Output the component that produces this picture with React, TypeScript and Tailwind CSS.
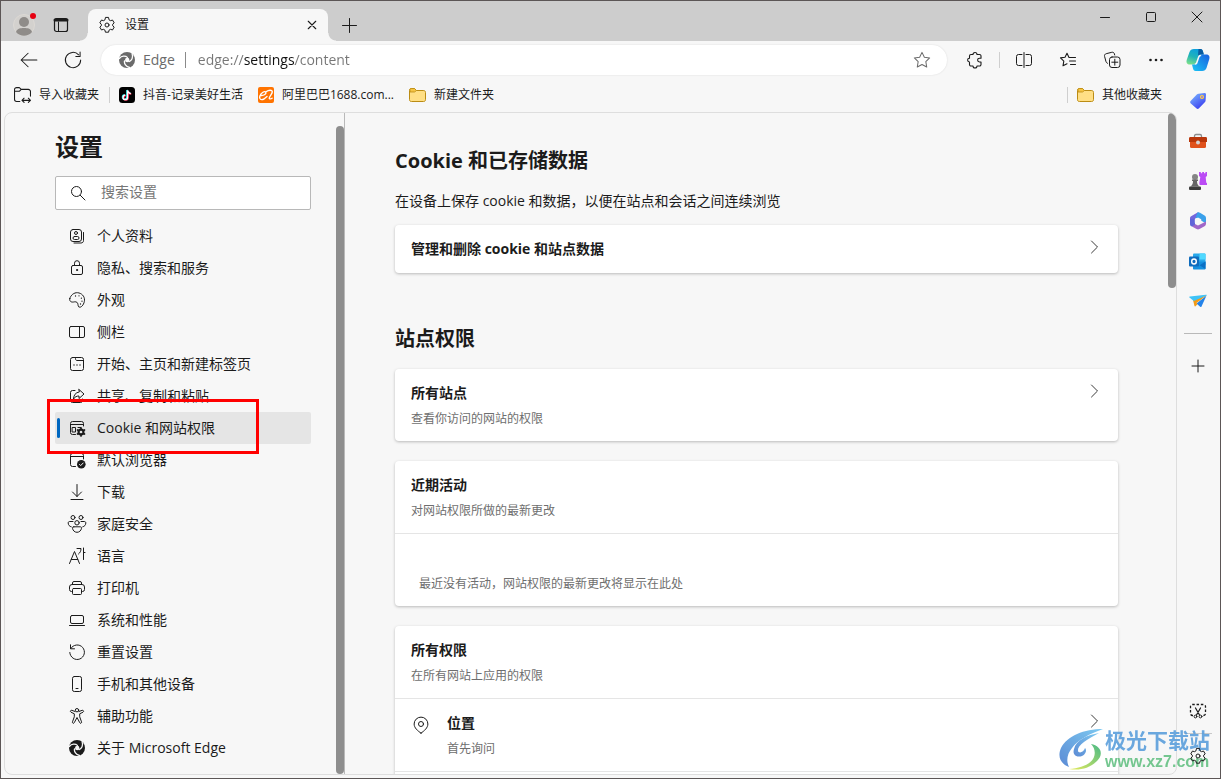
import { useState } from 'react';
import type { ReactNode } from 'react';

type IconProps = { children: ReactNode; className?: string };

function Icon({ children, className = 'size-4' }: IconProps) {
  return (
    <svg
      className={`shrink-0 overflow-visible ${className}`}
      viewBox="0 0 16 16"
      fill="none"
      stroke="currentColor"
      strokeLinecap="round"
      strokeLinejoin="round"
      aria-hidden="true"
    >
      {children}
    </svg>
  );
}

function GearIcon({ className }: { className?: string }) {
  return (
    <Icon className={className}>
      <path d="M6.4.8 6 2.800 4.400 3.700 2.500 3 .8 5.900 2.300 7.200v1.600L.8 10.100 2.500 13l1.900-.7 1.600.9.400 2h3.200l.4-2 1.600-.9 1.900.7 1.700-2.900-1.500-1.300V7.200l1.500-1.300L13.500 3l-1.900.7L10 2.800 9.600.8z" />
      <circle cx="8" cy="8" r="2" />
    </Icon>
  );
}

function EdgeIcon({ gap }: { gap: string }) {
  return (
    <svg className="size-4 shrink-0" viewBox="0 0 16 16" aria-hidden="true">
      <circle cx="8" cy="8" r="8" fill="currentColor" />
      <g fill="none" stroke={gap} strokeWidth="1.3" strokeLinecap="round">
        <path d="M.3 6.5C2.5 3.6 6.5 3.6 8.4 5.4" />
        <path d="M.3 6.5C2.5 3.6 6.5 3.6 8.4 5.4" transform="rotate(120 8 8)" />
        <path d="M.3 6.5C2.5 3.6 6.5 3.6 8.4 5.4" transform="rotate(240 8 8)" />
      </g>
      <circle cx="8.2" cy="8" r="2.2" fill={gap} />
    </svg>
  );
}

function FolderIcon() {
  return (
    <svg className="h-4 w-[17px] shrink-0" viewBox="0 0 17 16" aria-hidden="true">
      <path d="M.5 3.500C.5 2.200 1 1.500 2.200 1.500h3.300L7.500 3.500H14.200c1.600 0 2.300.7 2.300 2V12.700c0 1.200-.7 1.800-2 1.800H2.500c-1.300 0-2-.6-2-1.800z" fill="#ffdf85" stroke="#bb8c14" />
      <path d="M1 5h4.500L7.500 3.500 5.500 1.500H2.200C1.200 1.500 1 2 1 3z" fill="#f5c443" stroke="#bb8c14" strokeWidth=".8" />
    </svg>
  );
}

const navItems = [
  {
    label: '个人资料',
    icon: (
      <>
        <rect x="1.500" y="1.500" width="11" height="12" rx="2.500" />
        <circle cx="7" cy="5" r="1.500" />
        <rect x="4" y="8.500" width="6" height="3" rx="1.500" />
        <path d="M14.500 4.500v8c0 1.600-1 2.500-2.600 2.500H5" />
      </>
    ),
  },
  {
    label: '隐私、搜索和服务',
    icon: (
      <>
        <rect x="2.500" y="5.500" width="11" height="9" rx="1.500" />
        <path d="M5.500 5.500V3.200a2.500 2.500 0 0 1 5 0v2.300" />
        <circle cx="8" cy="10" r=".6" fill="currentColor" />
      </>
    ),
  },
  {
    label: '外观',
    icon: (
      <>
        <path d="M.8 6.500C1.800 3 5 .5 8.500.7c4 .3 7.200 3.500 7 7.500-.2 3.800-2.800 7-4.600 7-2.300 0-1.500-2.300-2.300-4C7.800 9.500 6 9.700 4.500 10 2.500 10.400 0 9.500.8 6.500z" />
        <path d="M6.500 4h.01M10 3.800h.01M12.400 6.200h.01M13 9.200h.01M11.500 12h.01" strokeWidth="1.300" />
      </>
    ),
  },
  {
    label: '侧栏',
    icon: (
      <>
        <rect x=".5" y="2.500" width="15" height="11" rx="1.500" />
        <path d="M10.500 2.500v11" />
      </>
    ),
  },
  {
    label: '开始、主页和新建标签页',
    icon: (
      <>
        <rect x="1.500" y="1.500" width="13" height="13" rx="2" />
        <path d="M6.500 1.500v1c0 1 .4 2 1.300 2h6.700" />
        <path d="M4.500 9h1M7.500 9h1M10.500 9h1" strokeWidth="1.600" strokeLinecap="butt" />
      </>
    ),
  },
  {
    label: '共享、复制和粘贴',
    icon: (
      <>
        <path d="M6 2.500H3.500a2 2 0 0 0-2 2v8a2 2 0 0 0 2 2h8a2 2 0 0 0 2-2V11" />
        <path d="M10 1.500 15 6l-5 4.500V8C7.500 8 6 8.800 4.500 11c.2-3.800 2-6.500 5.500-7z" />
      </>
    ),
  },
  {
    label: 'Cookie 和网站权限',
    icon: (
      <>
        <path d="M6.500 14.500h-3a2 2 0 0 1-2-2v-9a2 2 0 0 1 2-2h9a2 2 0 0 1 2 2V6M1.500 4.500h13" />
        <rect x="3.500" y="7.500" width="3" height="4.500" />
        <path d="M9 7.500h3" />
        <circle cx="12" cy="12" r="2.400" strokeWidth="2.200" />
        <path d="M12 8v8M8.500 10l7 4M15.500 10l-7 4" strokeWidth="1.700" />
        <circle cx="12" cy="12" r="1.300" fill="#e5e5e5" stroke="none" />
      </>
    ),
  },
  {
    label: '默认浏览器',
    icon: (
      <>
        <path d="M6.500 14.500h-3a2 2 0 0 1-2-2v-9a2 2 0 0 1 2-2h9a2 2 0 0 1 2 2V7M1.500 4.500h13" />
        <circle cx="12.300" cy="12.200" r="4.300" fill="currentColor" stroke="none" />
        <path d="m10.500 12.400 1.200 1.200 2.500-2.600" stroke="#f7f7f7" />
      </>
    ),
  },
  {
    label: '下载',
    icon: <path d="M8 .5v12M3.500 8 8 12.500 12.500 8M2 15.500h12" />,
  },
  {
    label: '家庭安全',
    icon: (
      <>
        <circle cx="4" cy="1.500" r="2" />
        <circle cx="12" cy="1.500" r="2" />
        <circle cx="8" cy="6.800" r="2.200" />
        <path d="M4 5.500H.8C-.3 5.500-.8 6-.8 7c0 2 1.300 3.500 3 3.800M12 5.500h3.200c1.100 0 1.600.5 1.600 1.500 0 2-1.300 3.500-3 3.800M4.800 10.800h6.400c1 0 1.500.5 1.300 1.500-.4 2.300-2.200 4-4.500 4s-4.100-1.700-4.500-4c-.2-1 .3-1.500 1.300-1.500z" />
      </>
    ),
  },
  {
    label: '语言',
    icon: (
      <path d="M.5 15.500 5.500 3.500l5 12M2.300 11.500h6.500M8 .5h4c0 2.500-.8 4.200-2.500 5.500M14.500 0v11.500M14.500 4.500H16" />
    ),
  },
  {
    label: '打印机',
    icon: (
      <>
        <path d="M3.500 11.500h-1a2 2 0 0 1-2-2V7a2.500 2.500 0 0 1 2.500-2.500h10A2.500 2.500 0 0 1 15.500 7v2.500a2 2 0 0 1-2 2h-1" />
        <path d="M3.500 4.500V3a1.500 1.500 0 0 1 1.500-1.500h6A1.500 1.500 0 0 1 12.500 3v1.500" />
        <rect x="3.500" y="8.500" width="9" height="6" rx="1" />
      </>
    ),
  },
  {
    label: '系统和性能',
    icon: (
      <>
        <rect x="1.500" y="3.500" width="13" height="8" rx="1.500" />
        <path d="M.5 13.500h15" />
      </>
    ),
  },
  {
    label: '重置设置',
    icon: <path d="M1.500.8v4h4M1.800 4.500A7.300 7.300 0 1 1 .8 8.500" />,
  },
  {
    label: '手机和其他设备',
    icon: (
      <>
        <rect x="3.500" y=".5" width="9" height="15" rx="1.800" />
        <path d="M7 12.500h2" />
      </>
    ),
  },
  {
    label: '辅助功能',
    icon: (
      <>
        <circle cx="8" cy="2.200" r="1.700" />
        <path d="M6 3.500 2.800 2.300c-1.300-.4-2 1.300-.8 1.900l3.300 1.600v3L3.500 13.800c-.5 1.500 1.200 2.100 1.800.8L8 9.500l2.700 5.100c.6 1.300 2.300.7 1.800-.8l-1.800-5v-3L14 4.200c1.200-.6.500-2.300-.8-1.900L10 3.500" />
      </>
    ),
  },
  { label: '关于 Microsoft Edge', icon: null },
];

function Watermark() {
  return (
    <div className="pointer-events-none absolute right-2.5 bottom-1.5 z-20 flex items-center font-bold opacity-90">
      <svg className="h-11 w-[46px]" viewBox="0 0 46 44" aria-hidden="true">
        <defs>
          <linearGradient id="swirlBlue" x1="0" y1="1" x2="1" y2="0">
            <stop offset="0" stopColor="#4b7fd0" />
            <stop offset="1" stopColor="#6fc4f0" />
          </linearGradient>
          <linearGradient id="swirlGreen" x1="0" y1="1" x2="1" y2="0">
            <stop offset="0" stopColor="#e6ea4a" />
            <stop offset="1" stopColor="#35b27a" />
          </linearGradient>
        </defs>
        <path d="M44 1C25 1 8 8 2 20c-4 9 0 16 8 19-3-6-2-13 3-19C19 12 30 6 44 1z" fill="url(#swirlBlue)" />
        <path d="M40 5c-12 2-23 7-25 16-2 6 3 9 8 7 4-2 5-6 3-8-1 4-6 6-7 3-1-6 10-12 21-18z" fill="url(#swirlBlue)" />
        <path d="M32 16c10 2 13 10 6 17-7 7-17 10-28 8 11-1 20-4 24-10 3-5 2-11-2-15z" fill="url(#swirlGreen)" />
      </svg>
      <div>
        <div className="text-[21px] leading-6 text-[#5b9fdc]">极光下载站</div>
        <div className="font-['Liberation_Sans'] text-[16px] leading-5 text-[#66c184]">www.xz7.com</div>
      </div>
    </div>
  );
}

function TitleBar() {
  return (
    <header className="flex h-10 shrink-0 items-stretch bg-[#cdcdcd]">
      <div className="flex w-[87px] items-center gap-[18px] pt-2 pl-3">
        <button aria-label="个人资料" className="relative">
          <svg className="size-[22px]" viewBox="0 0 22 22" aria-hidden="true">
            <circle cx="11" cy="11" r="10.500" fill="#d3d1ce" stroke="#dcd9d4" />
            <circle cx="11" cy="8" r="5" fill="#8f8c89" />
            <path d="M3 18c1-3.500 4-4 8-4s7 .5 8 4c-2 2.500-5 3.700-8 3.700S5 20.500 3 18z" fill="#8f8c89" />
          </svg>
          <span className="absolute -top-px -right-px size-1.5 rounded-full bg-[#e60012]" />
        </button>
        <button aria-label="标签页操作菜单">
          <Icon>
            <rect x="1.500" y="1.500" width="13" height="13" rx="2" strokeWidth="1.200" />
            <path d="M2 3h12" strokeWidth="3" />
            <path d="M5.500 5v9" />
          </Icon>
        </button>
      </div>
      <div className="relative mt-2 flex w-60 items-center rounded-t-lg bg-[#f7f7f7] px-[11px]">
        <span className="absolute bottom-0 -left-2 size-2 bg-[radial-gradient(circle_at_0_0,#cdcdcd_7px,#f7f7f7_8px)]" />
        <span className="absolute -right-2 bottom-0 size-2 bg-[radial-gradient(circle_at_100%_0,#cdcdcd_7px,#f7f7f7_8px)]" />
        <GearIcon className="size-4" />
        <span className="ml-2.5 flex-1 text-xs leading-4">设置</span>
        <button aria-label="关闭标签页">
          <Icon className="size-2.5">
            <path d="m2 2 12 12M14 2 2 14" strokeWidth="1.800" />
          </Icon>
        </button>
      </div>
      <button aria-label="新建标签页" className="mt-2 ml-[13px]">
        <Icon>
          <path d="M8.500 1.500v14M1.500 8.500h14" />
        </Icon>
      </button>
      <div className="ml-auto flex h-8">
        <button aria-label="最小化" className="flex w-[46px] items-center justify-center">
          <Icon className="size-4">
            <path d="M3.500 8.500h9" />
          </Icon>
        </button>
        <button aria-label="最大化" className="flex w-[46px] items-center justify-center">
          <Icon className="size-4">
            <rect x="3.500" y="3.500" width="9" height="9" rx="1" />
          </Icon>
        </button>
        <button aria-label="关闭" className="flex w-[46px] items-center justify-center">
          <Icon className="size-4">
            <path d="m3 3 10 10M13 3 3 13" />
          </Icon>
        </button>
      </div>
    </header>
  );
}

function ToolButton({ label, children }: { label: string; children: ReactNode }) {
  return (
    <button aria-label={label} className="flex h-8 w-10 shrink-0 items-center justify-center">
      {children}
    </button>
  );
}

function Toolbar() {
  const [url, setUrl] = useState('edge://settings/content');

  return (
    <div className="flex h-[38px] shrink-0 items-center gap-1 pr-px pl-2">
      <ToolButton label="返回">
        <Icon className="size-[18px]">
          <path d="M15 8H1M7.200 2 1 8l6.200 6" strokeWidth=".9" />
        </Icon>
      </ToolButton>
      <ToolButton label="刷新">
        <Icon className="size-[18px]">
          <path d="M14.800 8A6.800 6.800 0 1 1 13 3.400M14.300 1v3.800h-3.800" strokeWidth=".9" />
        </Icon>
      </ToolButton>
      <div className="mr-1 ml-1 flex h-[30px] flex-1 items-center rounded-full bg-white pr-4 pl-[18px] text-sm text-[#6b6b6b] shadow-[0_0_2px_rgba(0,0,0,0.12)]">
        <EdgeIcon gap="#ffffff" />
        <span className="ml-2 leading-5">Edge</span>
        <span className="mr-3 ml-2.5 h-4 w-px bg-[#8a8a8a]" />
        <input
          aria-label="地址栏"
          value={url}
          onChange={(e) => setUrl(e.target.value)}
          className="min-w-0 flex-1 bg-[linear-gradient(90deg,#767676_46px,#111_46px,#111_97px,#767676_97px)] bg-clip-text leading-5 text-transparent caret-black outline-none"
        />
        <button aria-label="收藏此页">
          <Icon className="size-[18px]">
            <path d="m8 1.200 2.100 4.300 4.700.7-3.400 3.300.8 4.700L8 12l-4.200 2.200.8-4.700L1.200 6.200l4.700-.7z" strokeWidth=".9" />
          </Icon>
        </button>
      </div>
      <ToolButton label="扩展">
        <Icon>
          <path d="M4 2.500h2a2 2 0 0 1 4 0h2.500a1.500 1.500 0 0 1 1.500 1.500v2.200h-1.500a1.900 1.900 0 0 0 0 3.800H14v2.500a1.500 1.500 0 0 1-1.500 1.500H10a2 2 0 0 1-4 0H4a1.500 1.500 0 0 1-1.500-1.500V10a1.900 1.900 0 0 1 0-3.800V4A1.500 1.500 0 0 1 4 2.500z" strokeWidth="1.100" />
        </Icon>
      </ToolButton>
      <span className="h-4 w-px bg-[#cfcfcf]" />
      <ToolButton label="拆分屏幕">
        <Icon>
          <path d="M6 2.500H2.500a2 2 0 0 0-2 2v7a2 2 0 0 0 2 2H6M10 2.500h3.500a2 2 0 0 1 2 2v7a2 2 0 0 1-2 2H10M8 .5v15" />
        </Icon>
      </ToolButton>
      <ToolButton label="收藏夹">
        <Icon>
          <path d="M9 5.500 7 1.200 5 5.200l-4.500.7 3.300 3.200-.8 4.700 4-2.100M9.500 5.500h6M9.500 9h6M10.500 12.500h5" strokeWidth="1.100" />
        </Icon>
      </ToolButton>
      <ToolButton label="集锦">
        <Icon>
          <path d="M3.500 11.300C2.500 10.900 2.200 10.300 1.900 9.300L.6 4.500c-.4-1.500.3-2.400 1.600-2.800l5.600-1.400c1.300-.3 2.200.3 2.600 1.500l.3 1.200" />
          <rect x="5.500" y="5" width="10.500" height="10.500" rx="2.500" />
          <path d="M10.800 7.200v6M7.800 10.200h6" />
        </Icon>
      </ToolButton>
      <ToolButton label="设置及其他">
        <Icon>
          <g fill="currentColor" stroke="none">
            <circle cx="2.500" cy="8" r="1.300" />
            <circle cx="8" cy="8" r="1.300" />
            <circle cx="13.500" cy="8" r="1.300" />
          </g>
        </Icon>
      </ToolButton>
    </div>
  );
}

function Bookmark({ icon, label }: { icon: ReactNode; label: string }) {
  return (
    <a href="#" className="flex items-center gap-2 text-xs leading-4 whitespace-nowrap text-[#1b1b1b]">
      {icon}
      {label}
    </a>
  );
}

function BookmarksBar() {
  return (
    <div className="flex h-[33px] shrink-0 items-center pr-[15px] pb-0.5 pl-[13px]">
      <Bookmark
        label="导入收藏夹"
        icon={
          <Icon className="size-[17px]">
            <path d="M5.500 14.500H2.500a2 2 0 0 1-2-2v-9a2 2 0 0 1 2-2H5l1.800 1.700h6.700a2 2 0 0 1 2 2V9.500M.5 5H5l1.800-1.800" />
            <path d="M7.500 13.500h8M9.500 11.500l-2 2 2 2M13.500 11.500l2 2-2 2" />
          </Icon>
        }
      />
      <span className="mr-[9px] ml-2.5 h-4 w-px bg-[#cfcfcf]" />
      <div className="flex items-center gap-[15px]">
        <Bookmark
          label="抖音-记录美好生活"
          icon={
            <svg className="size-4 shrink-0" viewBox="0 0 16 16" aria-hidden="true">
              <rect width="16" height="16" rx="3.500" fill="#000" />
              <g fill="none" strokeWidth="1.700">
                <path d="M8 3v7a2.200 2.200 0 1 1-2.200-2.200M8 3c.3 2 1.500 3 3.300 3.200" stroke="#25f4ee" />
                <path d="M9 3.800v7a2.200 2.200 0 1 1-2.200-2.200M9 3.800c.3 2 1.500 3 3.300 3.200" stroke="#fe2c55" />
                <path d="M8.500 3.400v7a2.200 2.200 0 1 1-2.200-2.200M8.500 3.400c.3 2 1.500 3 3.300 3.200" stroke="#fff" strokeWidth="1.300" />
              </g>
            </svg>
          }
        />
        <Bookmark
          label="阿里巴巴1688.com..."
          icon={
            <svg className="size-4 shrink-0" viewBox="0 0 16 16" aria-hidden="true">
              <rect width="16" height="16" rx="2" fill="#ff7300" />
              <path d="M3 8.500c3 .2 5.500-1.800 4.800-3.300C7 3.700 3 5.500 1.800 9.200c-.9 3 1.200 4.300 4.200 2.800l3-2.500M8.500 4.500c2-1.500 5.500-1.800 5.800 0 .3 2-2.800 4.500-3 6.500-.1 1.300 1.800 1 2.800.2" fill="none" stroke="#fff" strokeWidth="1.400" strokeLinecap="round" />
            </svg>
          }
        />
        <Bookmark label="新建文件夹" icon={<FolderIcon />} />
      </div>
      <span className="mr-[9px] ml-auto h-4 w-px bg-[#cfcfcf]" />
      <Bookmark label="其他收藏夹" icon={<FolderIcon />} />
    </div>
  );
}

function SettingsNav() {
  const [query, setQuery] = useState('');
  const [active, setActive] = useState('Cookie 和网站权限');

  return (
    <div className="flex w-[340px] shrink-0 border-r border-[#b9b9b9]">
      <div className="flex-1 pt-[18px] pr-[25px] pl-[50px]">
        <h1 className="text-2xl leading-8 font-bold">设置</h1>
        <label className="mt-[13px] flex h-[34px] items-center rounded-xs border border-[#b8b8b8] bg-white pl-3.5">
          <Icon className="size-4">
            <circle cx="6.500" cy="6.500" r="5" />
            <path d="m10.300 10.300 4.700 4.700" />
          </Icon>
          <input
            aria-label="搜索设置"
            placeholder="搜索设置"
            value={query}
            onChange={(e) => setQuery(e.target.value)}
            className="ml-[15px] w-40 pb-0.5 text-sm leading-5 outline-none placeholder:text-[#767676]"
          />
        </label>
        <nav className="mt-2.5">
          {navItems.map((item) => (
            <a
              key={item.label}
              href="#"
              onClick={() => setActive(item.label)}
              className={`relative flex h-8 items-center gap-3 rounded-xs pl-3.5 text-sm leading-5 whitespace-nowrap ${
                item.label === active ? 'z-10 bg-[#e5e5e5]' : ''
              }`}
            >
              {item.label === active && (
                <>
                  <span className="absolute top-1.5 left-0.5 h-5 w-[3px] rounded-xs bg-[#0067c0]" />
                  <span className="absolute -top-[13px] -left-2 h-[55px] w-[212px] border-3 border-[#ff0000]" />
                </>
              )}
              {item.icon ? <Icon>{item.icon}</Icon> : <EdgeIcon gap="#f7f7f7" />}
              {item.label}
            </a>
          ))}
        </nav>
      </div>
      <div className="mt-[13px] w-2 rounded-full bg-[#8e8e8e]" />
    </div>
  );
}

function Chevron() {
  return (
    <Icon className="ml-auto size-4 text-[#3a3a3a]">
      <path d="m5.500 2 6 6-6 6" />
    </Icon>
  );
}

type RowProps = { title: string; sub?: string; icon?: ReactNode; link?: boolean };

function Row({ title, sub, icon, link }: RowProps) {
  const body = (
    <>
      {icon}
      <div>
        <div className="text-sm leading-5 font-bold">{title}</div>
        {sub && <div className="mt-2 text-xs leading-4 text-[#6e6e6e]">{sub}</div>}
      </div>
      {link && <Chevron />}
    </>
  );
  return link ? (
    <a href="#" className="flex items-start px-4 py-3.5">
      {body}
    </a>
  ) : (
    <div className="flex items-start px-4 py-3.5">{body}</div>
  );
}

function Card({ children, className = '' }: { children: ReactNode; className?: string }) {
  return (
    <section className={`divide-y divide-[#e5e5e5] rounded bg-white shadow-[0_1px_3px_rgba(0,0,0,0.25)] ${className}`}>
      {children}
    </section>
  );
}

function SettingsContent() {
  return (
    <main className="flex min-w-0 flex-1">
      <div className="flex-1 px-[50px] pt-[34px]">
        <h2 className="text-xl leading-7 font-bold">Cookie 和已存储数据</h2>
        <p className="mt-4 text-sm leading-5">在设备上保存 cookie 和数据，以便在站点和会话之间连续浏览</p>
        <Card className="mt-3.5">
          <Row title="管理和删除 cookie 和站点数据" link />
        </Card>

        <h2 className="mt-[52px] text-xl leading-7 font-bold">站点权限</h2>
        <Card className="mt-4">
          <Row title="所有站点" sub="查看你访问的网站的权限" link />
        </Card>
        <Card className="mt-5">
          <Row title="近期活动" sub="对网站权限所做的最新更改" />
          <p className="px-6 pt-10 pb-3 text-xs leading-5 text-[#6e6e6e]">
            最近没有活动，网站权限的最新更改将显示在此处
          </p>
        </Card>
        <Card className="mt-5">
          <Row title="所有权限" sub="在所有网站上应用的权限" />
          <Row
            title="位置"
            sub="首先询问"
            link
            icon={
              <Icon className="mt-0.5 mr-4 size-5">
                <path d="M8 14.500C5.300 12.700 2.500 10.200 2.500 7.200a5.500 5.500 0 0 1 11 0c0 3-2.800 5.500-5.500 7.300z" strokeWidth=".8" />
                <circle cx="8" cy="7.200" r="2" strokeWidth=".8" />
              </Icon>
            }
          />
          <div className="h-5" />
        </Card>
      </div>
      <div className="h-[175px] w-2 rounded-full bg-[#8e8e8e]" />
    </main>
  );
}

function SideButton({ label, children }: { label: string; children: ReactNode }) {
  return (
    <button aria-label={label} className="relative z-30 flex h-10 w-full shrink-0 items-center justify-center">
      {children}
    </button>
  );
}

function EdgeSidebar() {
  return (
    <aside className="flex w-[43px] shrink-0 flex-col items-center pr-0.5 pb-0.5">
      <SideButton label="Copilot">
        <svg className="mb-0.5 size-6" viewBox="0 0 24 24" aria-hidden="true">
          <defs>
            <linearGradient id="cpA" x1=".2" y1="1" x2=".6" y2="0">
              <stop offset="0" stopColor="#7be08a" />
              <stop offset=".5" stopColor="#1fb3b9" />
              <stop offset="1" stopColor="#0b9fe0" />
            </linearGradient>
            <linearGradient id="cpB" x1="0" y1="1" x2="1" y2="0">
              <stop offset="0" stopColor="#18c6f5" />
              <stop offset="1" stopColor="#1a5fe0" />
            </linearGradient>
          </defs>
          <path d="M8 1h6.500C16 1 16.600 2 17 3.500l.8 3H16c-2 0-2.700 1-3.200 2.500L11 14c-.5 1.700-1.500 2.500-3 2.500H4c-3 0-4-2-3.300-4.500L3.500 4C4.300 2 5.500 1 8 1z" fill="url(#cpA)" />
          <path d="M12.500 1h2C16 1 16.600 2 17 3.500l.8 3H15c-1.500 0-2.500.5-3 1.500z" fill="#0b5a9f" />
          <path d="M16 23H9.500C8 23 7.400 22 7 20.500l-1-4h2c1.500 0 2.500-.8 3-2.500L12.800 9c.5-1.500 1.200-2.500 3.200-2.500h4c3 0 4 2 3.300 4.500L20.500 20c-.8 2-2 3-4.500 3z" fill="url(#cpB)" />
          <path d="M15.500 8c-1.300 0-1.800.7-2.200 1.800L11.500 15c-.4 1.200-1 1.700-2.300 1.700l-.7-.9c1-.3 1.300-.8 1.700-1.800L12 8.800c.5-1.300 1.200-2 2.500-2z" fill="#f7f7f7" />
        </svg>
      </SideButton>
      <SideButton label="购物">
        <svg className="size-4" viewBox="0 0 16 16" aria-hidden="true">
          <defs>
            <linearGradient id="tagG" x1="0" y1="0" x2=".7" y2="1">
              <stop offset="0" stopColor="#7fc0ff" />
              <stop offset="1" stopColor="#3a3cf0" />
            </linearGradient>
          </defs>
          <path d="M8.500.8 14.500 0c1 0 1.500.5 1.500 1.500l-.4 6c0 .8-.3 1.300-.8 1.800l-5.800 6c-.8.900-1.800.9-2.700 0L.8 10.500c-.9-.9-.9-1.900 0-2.700L6.800 1.600c.5-.5 1-.7 1.700-.8z" fill="url(#tagG)" />
          <circle cx="12" cy="4" r="1.500" fill="#8a6cff" stroke="#ffd23c" strokeWidth="1.200" />
        </svg>
      </SideButton>
      <SideButton label="工具">
        <svg className="size-[18px]" viewBox="0 0 18 18" aria-hidden="true">
          <path d="M5.500 6V4C5.500 3 6 2.500 7 2.500h4c1 0 1.500.5 1.500 1.500V6" fill="none" stroke="#8c8c8c" strokeWidth="1.300" />
          <rect x="1" y="6" width="16" height="10" rx="1.500" fill="#e0521c" />
          <path d="M0 6.500C0 5.500.5 5 1.500 5h15c1 0 1.500.5 1.500 1.500V10H0z" fill="#b9370b" />
          <circle cx="9" cy="10.500" r="2" fill="#d4d4d4" />
        </svg>
      </SideButton>
      <SideButton label="游戏">
        <svg className="size-[18px]" viewBox="0 0 18 18" aria-hidden="true">
          <path d="M10 0h1.800v1.300h1.400V0h1.800v1.300h1.400V0H18v4l-1.300 1 .5 5.500 1 1v1.500h-7.500L10.300 11l1-6L10 4z" fill="#bb4cf5" />
          <circle cx="6" cy="5" r="3" fill="#858585" />
          <path d="M3 7.500h6v1.400H8c0 3 .8 4 2.500 5.600h-9C3.200 12.900 4 11.900 4 8.900H3z" fill="#666" />
          <rect y="14.500" width="12" height="3.500" rx="1" fill="#3c3c3c" />
        </svg>
      </SideButton>
      <SideButton label="Microsoft 365">
        <svg className="size-[18px]" viewBox="0 0 18 18" aria-hidden="true">
          <path d="M9 .3 2.500 4C1.300 4.700 1 5.300 1 6.500v5C1 13 1.500 14 3 14.500L6 13V6.800L12 3z" fill="#7466dc" />
          <path d="M8.500.5C9.500 0 10 .2 11 .8L15.500 3.500C16.700 4.300 17 5 17 6.300v5.200L12 8.500 6.500 5.500z" fill="#3aa0ea" />
          <path d="M17 9.500v2c0 1.200-.4 2-1.500 2.700L10.500 17c-1 .6-2 .6-3 0L3 14.500l3-2.500 3 1.500z" fill="#a067c8" />
          <path d="M1 7v4.500C1 13 1.500 14 3 14.500L6 13V6.800z" fill="#4b62d6" opacity=".5" />
          <path d="M9 5.500 12.200 7.300v3.500L9 12.600l-3.200-1.800V7.300z" fill="#f7f7f7" />
        </svg>
      </SideButton>
      <SideButton label="Outlook">
        <svg className="size-[17px]" viewBox="0 0 17 17" aria-hidden="true">
          <rect x="4" y=".5" width="12.500" height="12" rx="1" fill="#28a8ea" />
          <path d="M10.500.5h5c.6 0 1 .4 1 1v5h-6z" fill="#50d9ff" />
          <path d="M4 8.500h12.500v7c0 .6-.4 1-1 1H5c-.6 0-1-.4-1-1z" fill="#1490df" />
          <path d="m16.500 8.500-6 3.800 6 3.700z" fill="#0a6fc4" />
          <rect y="3.500" width="10" height="10" rx="1" fill="#0f6cbd" />
          <ellipse cx="5" cy="8.500" rx="2.300" ry="2.500" fill="none" stroke="#fff" strokeWidth="1.400" />
        </svg>
      </SideButton>
      <SideButton label="Drop">
        <svg className="size-[18px]" viewBox="0 0 18 18" aria-hidden="true">
          <path d="M17.500 3.500 12.500 14.500c-.3.600-.8.700-1.300.3L7.500 11.500z" fill="#2383ea" />
          <path d="M17.700 3.300 4 8l1.500 6c.2.600.6.600 1 .2l2-2-1-1.200z" fill="#f29b17" />
          <path d="M.8 4.500 17 2.800c1 0 1 .5.500.8L4.800 9 .5 5.500C0 5 .2 4.600.8 4.500z" fill="#3fc3f7" />
        </svg>
      </SideButton>
      <span className="my-3 h-px w-7 shrink-0 bg-[#b9b9b9]" />
      <SideButton label="自定义">
        <Icon>
          <path d="M8 2v12M2 8h12" />
        </Icon>
      </SideButton>
      <div className="flex-1" />
      <SideButton label="屏幕截图">
        <Icon>
          <path d="M3 12.500H2.500a2 2 0 0 1-2-2v-7a2 2 0 0 1 2-2h11a2 2 0 0 1 2 2v7a2 2 0 0 1-2 2H13" strokeDasharray="2.500 1.800" strokeWidth="1.300" strokeLinecap="butt" />
          <path d="m5.500 5 4 7M10.500 5l-4 7" strokeWidth="1.200" />
          <circle cx="5.500" cy="13.500" r="1.400" />
          <circle cx="10.500" cy="13.500" r="1.400" />
        </Icon>
      </SideButton>
      <span className="my-0.5 h-px w-7 shrink-0 bg-[#c9c9c9]" />
      <SideButton label="设置">
        <GearIcon className="size-4" />
      </SideButton>
    </aside>
  );
}

export default function App() {
  return (
    <div className="relative flex h-screen flex-col overflow-hidden border border-[#5c5656] bg-[#f7f7f7] font-['Open_Sans','Noto_Sans_CJK_SC',sans-serif] text-[#1b1b1b]">
      <TitleBar />
      <div className="flex min-h-0 flex-1">
        <div className="flex min-w-0 flex-1 flex-col">
          <Toolbar />
          <BookmarksBar />
          <div className="mb-[3px] ml-[3px] flex min-h-0 flex-1 overflow-hidden rounded-lg border border-[#dedede]">
            <SettingsNav />
            <SettingsContent />
          </div>
        </div>
        <EdgeSidebar />
      </div>
      <Watermark />
    </div>
  );
}
